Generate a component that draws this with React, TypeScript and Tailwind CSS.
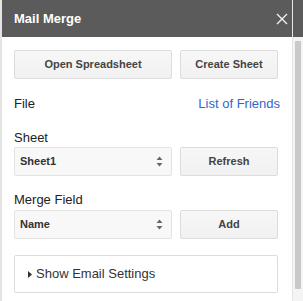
import React from 'react';

const btn =
  'h-[29px] rounded-[2px] border border-[#dcdcdc] bg-gradient-to-b from-[#f7f7f7] to-[#f1f1f1] text-[11px] font-bold text-[#444] flex items-center justify-center';

const Arrows: React.FC = () => (
  <svg width="7" height="11" viewBox="0 0 7 11" className="text-[#666]">
    <path d="M3.5 0.5 L6.5 4 L0.5 4 Z" fill="currentColor" />
    <path d="M3.5 10.5 L6.5 7 L0.5 7 Z" fill="currentColor" />
  </svg>
);

const Select: React.FC<{ value: string }> = ({ value }) => (
  <div className="w-[158px] h-[29px] rounded-[2px] border border-[#e3e3e3] bg-[#f8f8f8] flex items-center justify-between pl-[5px] pr-[8px]">
    <span className="text-[11px] font-bold text-[#333]">{value}</span>
    <Arrows />
  </div>
);

export default function App() {
  return (
    <div
      className="w-[303px] h-[301px] flex bg-white overflow-hidden"
      style={{ fontFamily: '"Liberation Sans", Arial, sans-serif' }}
    >
      <div className="flex-1 flex flex-col border-l-2 border-[#e4e4e4]">
        <div className="h-[37px] bg-[#5b5b5b] flex items-center justify-between pl-[12px] pr-[4px]">
          <span className="text-[13px] font-bold text-white">Mail Merge</span>
          <svg width="12" height="12" viewBox="0 0 12 12">
            <path d="M1 1 L11 11 M11 1 L1 11" stroke="#f2f2f2" strokeWidth="1.4" />
          </svg>
        </div>
        <div className="flex-1 pl-[12px] pr-[12px] pt-[13px]">
          <div className="flex gap-[8px]">
            <div className={`${btn} w-[158px]`}>Open Spreadsheet</div>
            <div className={`${btn} w-[98px]`}>Create Sheet</div>
          </div>
          <div className="mt-[17px] flex justify-between text-[13px] leading-[15px]">
            <span className="text-[#222]">File</span>
            <span className="text-[#3366cc]">List of Friends</span>
          </div>
          <div className="mt-[19px] text-[13px] leading-[15px] text-[#222]">Sheet</div>
          <div className="mt-[2px] flex gap-[8px]">
            <Select value="Sheet1" />
            <div className={`${btn} w-[98px]`}>Refresh</div>
          </div>
          <div className="mt-[16px] text-[13px] leading-[15px] text-[#222]">Merge Field</div>
          <div className="mt-[3px] flex gap-[8px]">
            <Select value="Name" />
            <div className={`${btn} w-[98px]`}>Add</div>
          </div>
          <div className="mt-[16px] w-[264px] h-[38px] rounded-[2px] border border-[#dcdcdc] flex items-center pl-[13px] gap-[4px]">
            <svg width="4" height="7" viewBox="0 0 4 7">
              <path d="M0 0 L4 3.5 L0 7 Z" fill="#333" />
            </svg>
            <span className="text-[13px] text-[#333]">Show Email Settings</span>
          </div>
        </div>
      </div>
      <div className="w-[11px] flex flex-col border-l border-[#e6e6e6] bg-[#f4f4f4]">
        <div className="h-[37px] bg-[#5b5b5b]" />
        <div className="mt-[4px] mx-[2px] h-[248px] bg-[#c9c9c9] rounded-[1px]" />
      </div>
    </div>
  );
}
